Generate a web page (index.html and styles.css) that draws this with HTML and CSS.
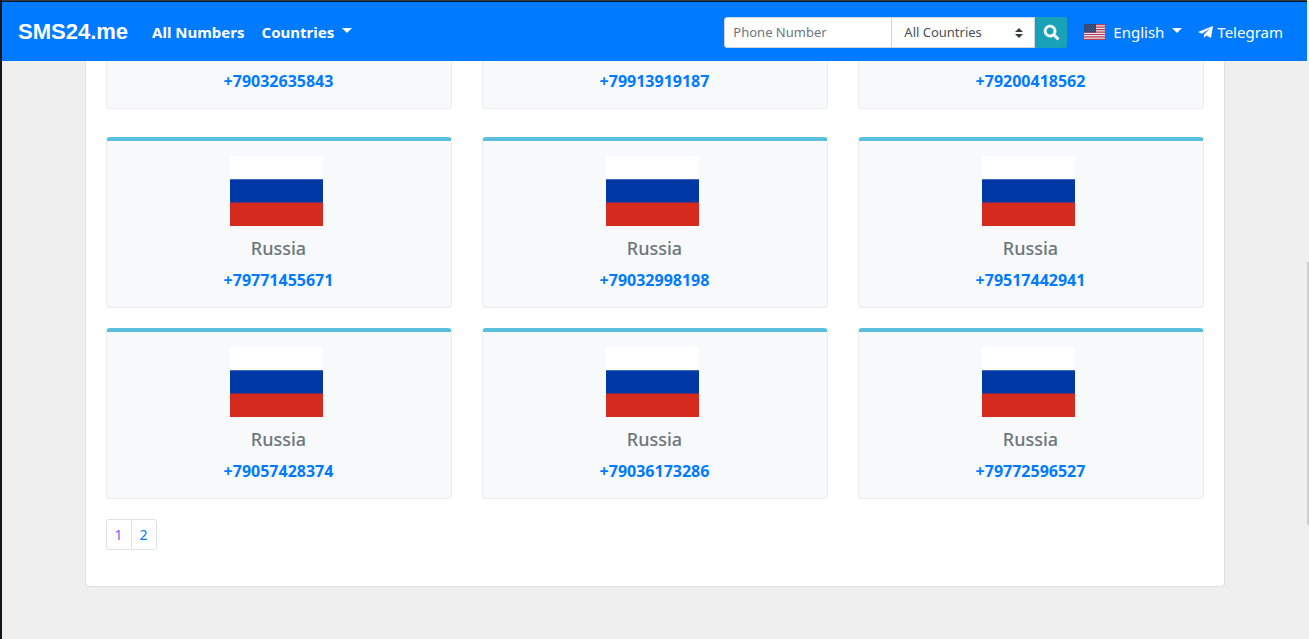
FILE: index.html
```html
<!DOCTYPE html>
<html lang="en">
<head>
<meta charset="utf-8">
<title>SMS24.me</title>
<link rel="stylesheet" href="styles.css">
</head>
<body>
<svg class="defs" aria-hidden="true">
  <symbol id="flag-ru" viewBox="0 0 93 70">
    <path fill="#fff" d="M0 0h93v24H0z"/>
    <path fill="#0039a6" d="M0 23.3h93v24H0z"/>
    <path fill="#d52b1e" d="M0 46.6h93V70H0z"/>
  </symbol>
</svg>
<header class="navbar">
  <a class="brand" href="#">SMS24.me</a>
  <nav class="nav nav-main">
    <a class="nav-link" href="#">All Numbers</a>
    <a class="nav-link" href="#">Countries <span class="caret"></span></a>
  </nav>
  <form class="search">
    <input class="search-input" type="text" placeholder="Phone Number" aria-label="Phone Number">
    <div class="select-wrap">
      <select class="search-select" aria-label="Country"><option>All Countries</option></select>
      <svg class="select-arrows" viewBox="0 0 4 5" aria-hidden="true"><path fill="#343a40" d="M2 0L0 2h4zm0 5L0 3h4z"/></svg>
    </div>
    <button class="search-button" type="button" aria-label="Search">
      <svg class="search-icon" viewBox="0 0 512 512" aria-hidden="true"><path fill="#fff" stroke="#fff" stroke-width="16" d="M505 442.7L405.3 343c-4.500-4.500-10.600-7-17-7H372c27.600-35.300 44-79.700 44-128C416 93.100 322.900 0 208 0S0 93.100 0 208s93.100 208 208 208c48.300 0 92.700-16.400 128-44v16.300c0 6.400 2.500 12.500 7 17l99.700 99.700c9.400 9.400 24.600 9.400 33.900 0l28.300-28.300c9.400-9.400 9.400-24.600.1-34zM208 336c-70.700 0-128-57.200-128-128 0-70.700 57.200-128 128-128 70.700 0 128 57.200 128 128 0 70.700-57.200 128-128 128z"/></svg>
    </button>
  </form>
  <nav class="nav nav-side">
    <a class="nav-link" href="#">
      <svg class="flag-us" viewBox="0 0 21 16" aria-hidden="true">
        <path fill="#e4e3ef" d="M0 0h21v16H0z"/>
        <path stroke="#bd3d50" stroke-width="1.200" d="M0 .6h21M0 3.100h21M0 5.600h21M0 8.100h21M0 10.500h21M0 12.900h21M0 15.400h21"/>
        <path fill="#344675" d="M0 0h12v8.600H0z"/>
        <path stroke="#66759b" stroke-width=".7" stroke-dasharray=".8 1.200" d="M1 1.500h10M2 3.200h9M1 4.900h10M2 6.600h9"/>
      </svg>English <span class="caret"></span></a>
    <a class="nav-link telegram" href="#"><svg class="plane" viewBox="0 0 15 12" aria-hidden="true"><path fill="#fff" d="M15 0L0 6l4 1.700 8.300-5.500L6 8.600V12l2.300-2.500L13 12z"/></svg>Telegram</a>
  </nav>
</header>
<div class="scroll-thumb"></div>
<main class="panel">
  <div class="cards cards-scrolled">
    <article class="card"><a class="number" href="#">+79032635843</a></article>
    <article class="card"><a class="number" href="#">+79913919187</a></article>
    <article class="card"><a class="number" href="#">+79200418562</a></article>
  </div>
  <div class="cards">
    <article class="card"><svg class="flag" role="img" aria-label="Flag of Russia"><use href="#flag-ru"/></svg><h5 class="country">Russia</h5><a class="number" href="#">+79771455671</a></article>
    <article class="card"><svg class="flag" role="img" aria-label="Flag of Russia"><use href="#flag-ru"/></svg><h5 class="country">Russia</h5><a class="number" href="#">+79032998198</a></article>
    <article class="card"><svg class="flag" role="img" aria-label="Flag of Russia"><use href="#flag-ru"/></svg><h5 class="country">Russia</h5><a class="number" href="#">+79517442941</a></article>
    <article class="card"><svg class="flag" role="img" aria-label="Flag of Russia"><use href="#flag-ru"/></svg><h5 class="country">Russia</h5><a class="number" href="#">+79057428374</a></article>
    <article class="card"><svg class="flag" role="img" aria-label="Flag of Russia"><use href="#flag-ru"/></svg><h5 class="country">Russia</h5><a class="number" href="#">+79036173286</a></article>
    <article class="card"><svg class="flag" role="img" aria-label="Flag of Russia"><use href="#flag-ru"/></svg><h5 class="country">Russia</h5><a class="number" href="#">+79772596527</a></article>
  </div>
  <nav class="pagination" aria-label="Pages">
    <a class="page page-visited" href="#">1</a>
    <a class="page" href="#">2</a>
  </nav>
</main>
</body>
</html>
```
FILE: styles.css
```css
* { box-sizing: border-box; }
body {
  margin: 0;
  min-height: 100vh;
  padding-right: 2px;
  border-left: 2px solid #10161c;
  background: #efefef;
  font: 16px/24px "Noto Sans", sans-serif;
}
a { text-decoration: none; }
.defs { display: none; }

.navbar {
  display: flex;
  align-items: center;
  height: 61px;
  padding: 2px 16px 0;
  border-top: 1px solid #343d46;
  box-shadow: inset 0 1px #07131f;
  background: #007bff;
}
.brand {
  color: #fff;
  font: bold 22px/32px "Liberation Sans", sans-serif;
}
.nav { display: flex; }
.nav-link {
  display: flex;
  align-items: center;
  padding: 8px;
  color: #fff;
  font-size: 15px;
}
.nav-main { gap: 1px; margin-left: 16px; }
.nav-main .nav-link { font-weight: 700; }
.caret {
  margin: 0 0 4px 8px;
  border: 5px solid transparent;
  border-top-color: #fff;
  border-bottom: 0;
}

.search {
  display: flex;
  height: 31px;
  margin-left: auto;
  margin-right: 9px;
}
.search-input, .search-select {
  height: 31px;
  margin: 0;
  border: 1px solid #ced4da;
  background: #fff;
  font: 13px/20px "Noto Sans", sans-serif;
}
.search-input {
  width: 168px;
  padding: 4px 8px;
  border-radius: 3px 0 0 3px;
}
.search-input::placeholder { color: #6c757d; opacity: 1; }
.select-wrap {
  position: relative;
  margin-left: -1px;
}
.search-select {
  width: 144px;
  padding: 4px 28px 4px 12px;
  border-radius: 0;
  color: #495057;
  appearance: none;
}
.select-arrows {
  position: absolute;
  top: 11px;
  right: 12px;
  width: 8px;
  height: 10px;
  pointer-events: none;
}
.search-button {
  display: flex;
  align-items: center;
  justify-content: center;
  width: 32px;
  padding: 0;
  border: 0;
  border-radius: 0 3px 3px 0;
  background: #17a2b8;
}
.search-icon { width: 15px; height: 15px; overflow: visible; }
.flag-us { width: 21px; height: 16px; margin-right: 8px; }
.plane { width: 15px; height: 12px; margin-right: 4px; }

.scroll-thumb {
  position: fixed;
  top: 262px;
  right: 0;
  width: 2px;
  height: 263px;
  background: #cdcdcd;
}

.panel {
  max-width: 1140px;
  margin: 0 auto;
  padding: 0 20px 36px;
  border: 1px solid #dfdfdf;
  border-top: 0;
  border-radius: 0 0 4px 4px;
  background: #fff;
}
.cards {
  display: grid;
  grid-template-columns: repeat(3, 1fr);
  gap: 20px 30px;
}
.card {
  display: flex;
  flex-direction: column;
  align-items: center;
  padding: 15px 0;
  border: 1px solid #ececec;
  border-top: 4px solid #5bc0de;
  border-radius: 4px;
  background: #f8f9fa;
}
.cards-scrolled { margin-bottom: 28px; }
.cards-scrolled .card {
  padding-top: 8px;
  border-top: 0;
  border-radius: 0 0 4px 4px;
}
.flag {
  width: 93px;
  height: 70px;
  margin-right: 4px;
}
.country {
  margin: 10px 0 8px;
  color: #6c757d;
  font-size: 18px;
  font-weight: 500;
  line-height: 24px;
}
.number {
  color: #007bff;
  font-size: 16px;
  font-weight: 700;
}

.pagination {
  display: flex;
  margin-top: 20px;
}
.page {
  padding: 4px 8px;
  border: 1px solid #dee2e6;
  border-radius: 0 3px 3px 0;
  color: #007bff;
  font-size: 14px;
  line-height: 21px;
}
.page-visited {
  margin-right: -1px;
  border-radius: 3px 0 0 3px;
  color: #7b5cff;
}
```
